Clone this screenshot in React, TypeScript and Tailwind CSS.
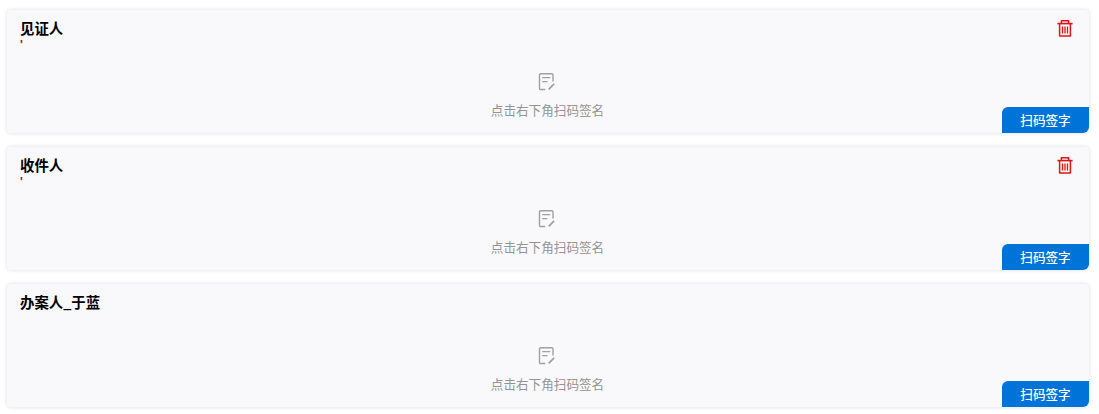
type Signer = { name: string; mark: boolean; removable: boolean };

const signers: Signer[] = [
  { name: '见证人', mark: true, removable: true },
  { name: '收件人', mark: true, removable: true },
  { name: '办案人_于蓝', mark: false, removable: false },
];

function TrashIcon() {
  return (
    <svg width="16" height="18" viewBox="0 0 16 18" fill="none" stroke="#e01414">
      <path d="M4.4 3.5V.8H11.6V3.5" strokeWidth="1.5" strokeLinejoin="round" />
      <path d="M.4 3.6H15.6" strokeWidth="1.6" />
      <path d="M2.6 4V16.1H13.4V4" strokeWidth="1.5" strokeLinejoin="round" />
      <path d="M5.5 6.5V13.5M8 6.5V13.5M10.5 6.5V13.5" strokeWidth="1.3" />
    </svg>
  );
}

function SignIcon() {
  return (
    <svg width="18" height="18" viewBox="0 0 18 18" fill="none" stroke="#a0a0a2" strokeWidth="1.4">
      <path d="M7.3 16.5H2.8Q1.5 16.5 1.5 15.2V1.9Q1.5 .7 2.8 .7H13.7Q15 .7 15 1.9V8.4" />
      <path d="M4.2 4.6H12.2M4.2 8.6H9.4" />
      <path d="M10.7 16.3L16.1 10.9" strokeWidth="1.8" />
    </svg>
  );
}

function SignatureCard({ name, mark, removable }: Signer) {
  return (
    <section className="relative flex h-[123px] flex-col items-center rounded-[4px] bg-[#f9f9fb] shadow-[0_0_4px_rgba(0,0,0,0.14)]">
      <header className="flex h-[63px] w-full items-start justify-between pt-[8px] pr-[16px] pl-[13px]">
        <div>
          <h2 className="h-[20px] text-[14.4px] leading-[20px] font-bold text-black">{name}</h2>
          {mark && <p className="h-[10px] font-['Liberation_Sans'] text-[12px] leading-[14px] font-bold text-[#982c00]">'</p>}
        </div>
        {removable && (
          <button aria-label="删除" className="mt-[2px]">
            <TrashIcon />
          </button>
        )}
      </header>
      <div className="pr-[2px]">
        <SignIcon />
      </div>
      <p className="mt-[9px] pr-px text-[12.6px] leading-[20px] text-[#949494]">点击右下角扫码签名</p>
      <button className="absolute right-0 bottom-0 h-[26px] w-[87px] rounded-tl-[6px] rounded-br-[6px] bg-[#0073d8] text-[12.6px] leading-[26px] font-medium text-white">
        扫码签字
      </button>
    </section>
  );
}

export default function App() {
  return (
    <main className="flex h-[414px] flex-col gap-[14px] overflow-hidden bg-white pt-[10px] pr-[10px] pl-[7px] font-['Noto_Sans_CJK_SC',sans-serif]">
      {signers.map((signer) => (
        <SignatureCard key={signer.name} {...signer} />
      ))}
    </main>
  );
}
